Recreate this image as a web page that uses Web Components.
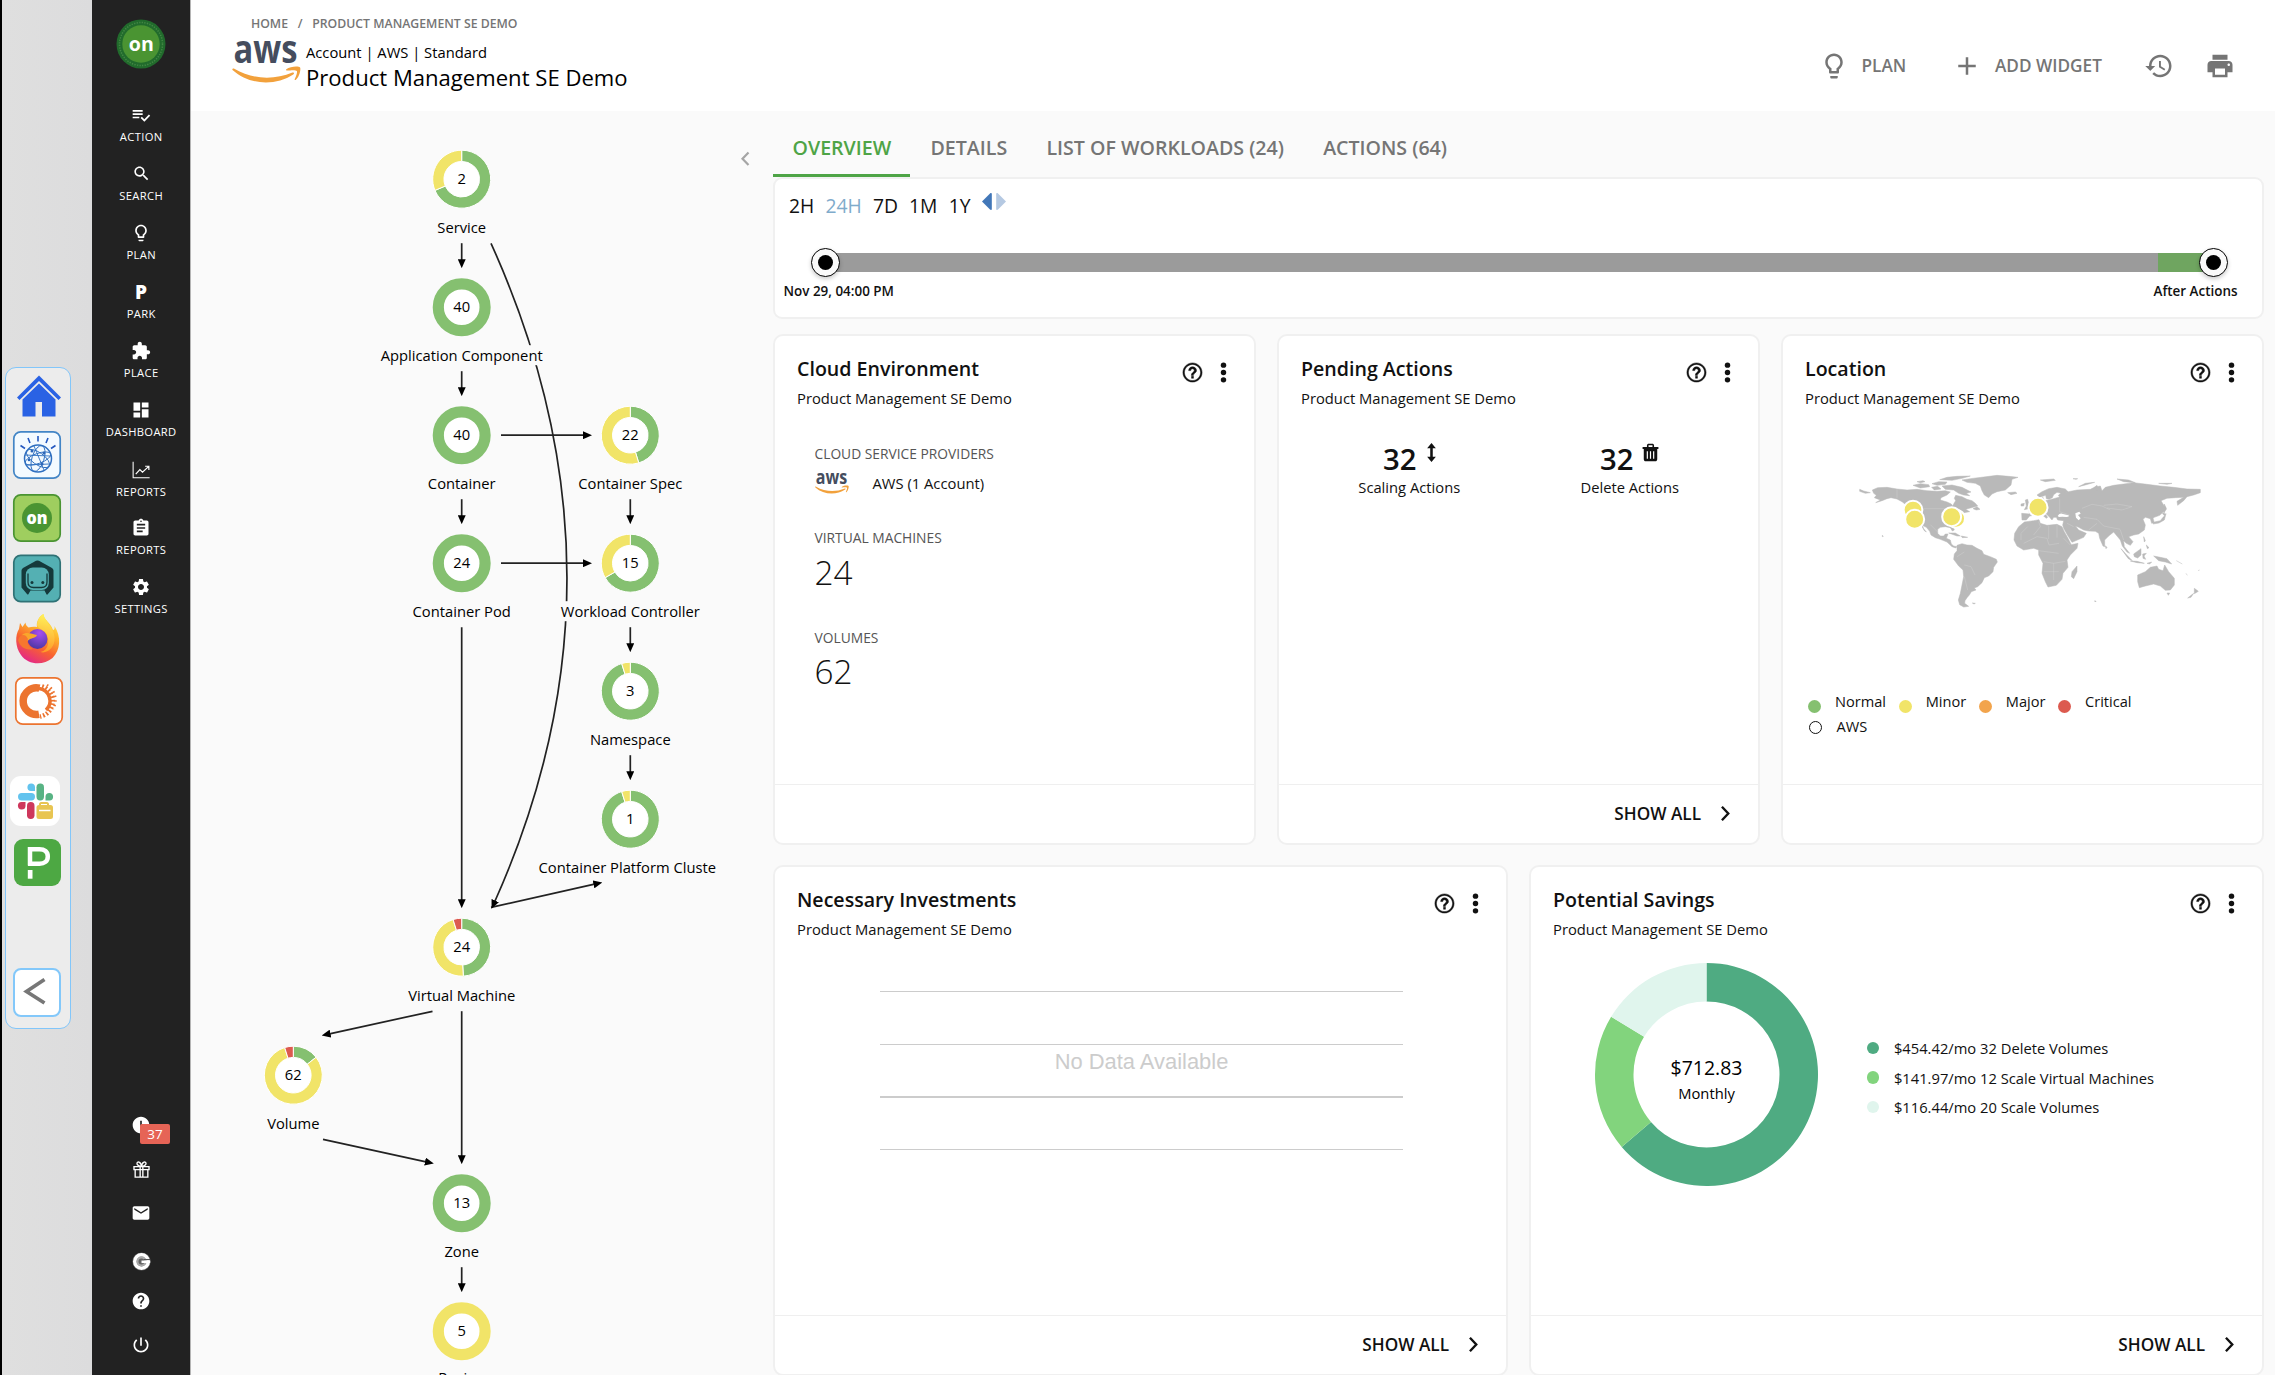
<!DOCTYPE html>
<html lang="en">
<head>
<meta charset="utf-8">
<title>Product Management SE Demo</title>
<style>
  html, body { margin: 0; height: 100%; overflow: hidden; }
  body { font-family: "Open Sans", "Liberation Sans", sans-serif; color: #111; background: #fafafa; }
</style>
</head>
<body>
<ops-app></ops-app>

<script>
const ICONS = {
  action: '<path d="M14 10H2v2h12v-2zm0-4H2v2h12V6zM2 16h8v-2H2v2zm19.5-4.5L23 13l-6.99 7-4.51-4.5L13 14l3.01 3 5.49-5.5z"/>',
  search: '<path d="M15.5 14h-.79l-.28-.27C15.41 12.59 16 11.11 16 9.5 16 5.91 13.09 3 9.5 3S3 5.91 3 9.5 5.91 16 9.5 16c1.61 0 3.09-.59 4.23-1.57l.27.28v.79l5 4.99L20.49 19l-4.99-5zm-6 0C7.01 14 5 11.99 5 9.5S7.01 5 9.5 5 14 7.01 14 9.5 11.99 14 9.5 14z"/>',
  bulb: '<path d="M9 21c0 .55.45 1 1 1h4c.55 0 1-.45 1-1v-1H9v1zm3-19C8.14 2 5 5.14 5 9c0 2.38 1.19 4.47 3 5.74V17c0 .55.45 1 1 1h6c.55 0 1-.45 1-1v-2.26c1.81-1.27 3-3.36 3-5.74 0-3.86-3.14-7-7-7zm2.85 11.1l-.85.6V16h-4v-2.3l-.85-.6C7.8 12.16 7 10.63 7 9c0-2.76 2.24-5 5-5s5 2.24 5 5c0 1.63-.8 3.16-2.15 4.1z"/>',
  place: '<path d="M20.5 11H19V7c0-1.1-.9-2-2-2h-4V3.5C13 2.12 11.88 1 10.5 1S8 2.12 8 3.5V5H4c-1.1 0-1.99.9-1.99 2v3.8H3.5c1.49 0 2.7 1.21 2.7 2.7s-1.21 2.7-2.7 2.7H2V20c0 1.1.9 2 2 2h3.8v-1.5c0-1.49 1.21-2.7 2.7-2.7 1.49 0 2.7 1.21 2.7 2.7V22H17c1.1 0 2-.9 2-2v-4h1.5c1.38 0 2.5-1.12 2.5-2.5S21.88 11 20.5 11z"/>',
  dashboard: '<path d="M3 13h8V3H3v10zm0 8h8v-6H3v6zm10 0h8V11h-8v10zm0-18v6h8V3h-8z"/>',
  chart: '<g fill="none" stroke="currentColor" stroke-width="1.4"><path d="M1.5 1v21.3H23.5"/><path stroke-width="1.6" d="M5 17.5l5.5-6 3.5 3.5L22 7.5M17.5 7H22.5V12"/></g>',
  clipboard: '<path d="M19 3h-4.18C14.4 1.84 13.3 1 12 1c-1.3 0-2.4.84-2.82 2H5c-1.1 0-2 .9-2 2v14c0 1.1.9 2 2 2h14c1.1 0 2-.9 2-2V5c0-1.1-.9-2-2-2zm-7 0c.55 0 1 .45 1 1s-.45 1-1 1-1-.45-1-1 .45-1 1-1zm2 14H7v-2h7v2zm3-4H7v-2h10v2zm0-4H7V7h10v2z"/>',
  gear: '<path d="M19.14,12.94c0.04-0.3,0.06-0.61,0.06-0.94c0-0.32-0.02-0.64-0.07-0.94l2.03-1.58c0.18-0.14,0.23-0.41,0.12-0.61l-1.92-3.32c-0.12-0.22-0.37-0.29-0.59-0.22l-2.39,0.96c-0.5-0.38-1.03-0.7-1.62-0.94L14.4,2.81c-0.04-0.24-0.24-0.41-0.48-0.41h-3.84c-0.24,0-0.43,0.17-0.47,0.41L9.25,5.35C8.66,5.59,8.12,5.92,7.63,6.29L5.24,5.33c-0.22-0.08-0.47,0-0.59,0.22L2.74,8.87C2.62,9.08,2.66,9.34,2.86,9.48l2.03,1.58C4.84,11.36,4.8,11.69,4.8,12s0.02,0.64,0.07,0.94l-2.03,1.58c-0.18,0.14-0.23,0.41-0.12,0.61l1.92,3.32c0.12,0.22,0.37,0.29,0.59,0.22l2.39-0.96c0.5,0.38,1.03,0.7,1.62,0.94l0.36,2.54c0.05,0.24,0.24,0.41,0.48,0.41h3.84c0.24,0,0.44-0.17,0.47-0.41l0.36-2.54c0.59-0.24,1.13-0.56,1.62-0.94l2.39,0.96c0.22,0.08,0.47,0,0.59-0.22l1.92-3.32c0.12-0.22,0.07-0.47-0.12-0.61L19.14,12.94z M12,15.6c-1.98,0-3.6-1.62-3.6-3.6s1.62-3.6,3.6-3.6s3.6,1.62,3.6,3.6S13.98,15.6,12,15.6z"/>',
  alert: '<path d="M12 2C6.48 2 2 6.48 2 12s4.48 10 10 10 10-4.48 10-10S17.52 2 12 2zm1 15h-2v-2h2v2zm0-4h-2V7h2v6z"/>',
  gift: '<g fill="none" stroke="currentColor" stroke-width="1.7"><path d="M2.5 8.3h19v3.9h-19zM4 12.2h16v9.4H4zM10.3 8.3v13.3M13.7 8.3v13.3M12 8C9 7.500 6.300 6.500 6.300 4.300 6.300 1.500 11 1.500 12 8c1-6.500 5.700-6.500 5.700-3.700C17.700 6.500 15 7.500 12 8z"/></g>',
  mail: '<path d="M20 4H4c-1.1 0-1.99.9-1.99 2L2 18c0 1.100.9 2 2 2h16c1.100 0 2-.9 2-2V6c0-1.100-.9-2-2-2zm0 4l-8 5-8-5V6l8 5 8-5v2z"/>',
  google: '<circle cx="12" cy="12" r="11.500" fill="#999" opacity=".55"/><circle cx="12" cy="12" r="8.500" fill="none" stroke="#fff" stroke-width="4.500"/><circle cx="12" cy="12" r="5" fill="none" stroke="#aaa" stroke-width="2.500"/><path fill="#555" d="M15 8.800h8v1.500h-8z"/><path fill="#fff" d="M12 10.800h11v3.200H12z"/>',
  help: '<path d="M12 2C6.480 2 2 6.480 2 12s4.480 10 10 10 10-4.480 10-10S17.520 2 12 2zm1 17h-2v-2h2v2zm2.070-7.750l-.9.920C13.450 12.900 13 13.500 13 15h-2v-.5c0-1.100.450-2.100 1.170-2.830l1.240-1.260c.370-.360.590-.860.590-1.410 0-1.100-.9-2-2-2s-2 .9-2 2H8c0-2.210 1.790-4 4-4s4 1.790 4 4c0 .880-.360 1.680-.930 2.250z"/>',
  power: '<path d="M13 3h-2v10h2V3zm4.830 2.170l-1.420 1.420C17.990 7.860 19 9.810 19 12c0 3.870-3.130 7-7 7s-7-3.130-7-7c0-2.190 1.010-4.140 2.580-5.420L6.170 5.170C4.230 6.820 3 9.260 3 12c0 4.970 4.030 9 9 9s9-4.030 9-9c0-2.740-1.230-5.180-3.170-6.830z"/>',
  plus: '<path d="M19 13h-6v6h-2v-6H5v-2h6V5h2v6h6v2z"/>',
  history: '<path d="M13 3c-4.970 0-9 4.030-9 9H1l3.890 3.890.070.140L9 12H6c0-3.870 3.130-7 7-7s7 3.130 7 7-3.130 7-7 7c-1.930 0-3.680-.790-4.940-2.060l-1.420 1.420C8.270 19.990 10.510 21 13 21c4.970 0 9-4.030 9-9s-4.030-9-9-9zm-1 5v5l4.280 2.540.720-1.210-3.500-2.080V8H12z"/>',
  print: '<path d="M19 8H5c-1.660 0-3 1.340-3 3v6h4v4h12v-4h4v-6c0-1.660-1.340-3-3-3zm-3 11H8v-5h8v5zm3-7c-.550 0-1-.450-1-1s.450-1 1-1 1 .450 1 1-.450 1-1 1zm-1-9H6v4h12V3z"/>',
  question: '<path stroke="currentColor" stroke-width=".5" d="M11 18h2v-2h-2v2zm1-16C6.480 2 2 6.480 2 12s4.480 10 10 10 10-4.480 10-10S17.520 2 12 2zm0 18.400c-4.600 0-8.400-3.800-8.400-8.400S7.400 3.600 12 3.600s8.400 3.800 8.400 8.400-3.800 8.400-8.400 8.400zM12 6c-2.210 0-4 1.790-4 4h2.200c0-1.100.8-1.900 1.800-1.900s1.800.8 1.800 1.900c0 2-3 1.750-3 5h2.200c0-2.250 3.200-2.500 3.200-5 0-2.210-1.990-4-4.200-4z"/>',
  dots: '<circle cx="12" cy="3.600" r="3.100"/><circle cx="12" cy="12" r="3.100"/><circle cx="12" cy="20.400" r="3.100"/>',
  next: '<path fill="none" stroke="currentColor" stroke-width="3" d="M7.500 3.500l8 8.500-8 8.500"/>',
  resize: '<path d="M12 0l5.500 6.600h-3.900v10.800h3.900L12 24l-5.500-6.600h3.900V6.600H6.500z"/>',
  trash: '<path d="M2 5h20v2.500H2zM7.500 5V3.200C7.500 1.500 8.500.8 10 .8h4c1.500 0 2.500.7 2.500 2.400V5h-2V2.800h-5V5zM3.500 7.500h17v13c0 1.500-1 2.700-2.500 2.700H6c-1.500 0-2.500-1.200-2.500-2.700z"/><path stroke="#fff" stroke-width="1.500" d="M8 10.500v9.500M12 10.500v9.500M16 10.500v9.500"/>'
};

/* Base class: clones its template into an open shadow root. */
class OpsElement extends HTMLElement {
  connectedCallback() {
    if (this.shadowRoot) return;
    const t = document.createElement('template');
    t.innerHTML = '<style>*{box-sizing:border-box}' + this.constructor.css + '</style>' + this.render();
    this.attachShadow({ mode: 'open' }).append(t.content.cloneNode(true));
  }
  a(n, d = '') { return this.getAttribute(n) ?? d; }
}
const define = (name, css, render) => customElements.define(name, class extends OpsElement {
  static css = css;
  render() { return render(this); }
});

define('ops-icon', `:host{display:block;flex:none;line-height:0}svg{display:block;fill:currentColor}`,
  e => `<svg width="${e.a('size', 20)}" height="${e.a('size', 20)}" viewBox="0 0 24 24">${ICONS[e.a('name')] || ''}</svg>`);

define('aws-logo', `:host{display:block;flex:none}svg{display:block;overflow:visible}text{font:700 38px "Open Sans",sans-serif;fill:#454d5e}`,
  e => `<svg width="${e.a('width', 68)}" height="${+e.a('width', 68) * 44 / 68}" viewBox="0 0 68 44">
    <text x="1.500" y="24" textLength="63" lengthAdjust="spacingAndGlyphs">aws</text>
    <path fill="#f2a13c" d="M.5 29.500C1 28.800 1.600 29 2.300 29.400 20 40 42 40.500 59.500 33c1.600-.5 2.300 1 .9 2C43 46.500 17 45.500.8 30.800.3 30.300.2 29.900.5 29.500z"/>
    <path fill="#f2a13c" d="M53.500 29.800c4-3 12.500-3.200 13.600-1.700 1 1.500-.6 9.300-4.300 12.200-.7.5-1.300.1-1-.6 1-2.400 3-7 2.100-8.200-.9-1.200-6.200-.7-9.300-.4-1.100.1-1.700-.7-1.100-1.300z"/>
  </svg>`);

/* ---------- desktop dock ---------- */
define('dock-tile', `
  :host{display:block;flex:none;width:48px;height:48px}
  svg{display:block;width:100%;height:100%;overflow:visible}
  text{font:800 18px "Open Sans",sans-serif}`,
  e => {
    const box = (fill, stroke) => `<rect x=".8" y=".8" width="46.400" height="46.400" rx="7" fill="${fill}" stroke="${stroke}" stroke-width="1.700"/>`;
    const art = {
      home: `<svg viewBox="0 0 44 42" preserveAspectRatio="none"><path fill="#2a62e4" d="M22 .5L44 22.500 41.500 25 22 6 2.500 25 0 22.500z"/><path fill="#2a62e4" d="M22 8.500L38.500 24.500V41.500H25V27h-6.500v14.500H5.500V24.500z"/></svg>`,
      globe: `<svg viewBox="0 0 48 48">${box('#f3faff', '#4285c6')}<g fill="none" stroke="#2f6fc0" stroke-width=".9"><circle cx="25" cy="27.500" r="13.500" stroke-width="1.500"/><ellipse cx="25" cy="27.500" rx="6" ry="13.500" transform="rotate(18 25 27.500)"/><ellipse cx="25" cy="27.500" rx="13.500" ry="5" transform="rotate(-20 25 27.500)"/><ellipse cx="25" cy="27.500" rx="13.500" ry="6" transform="rotate(35 25 27.500)"/><path d="M12 24l25 1M14 34l22-1M21 15l10 24"/></g><g fill="#2c66b8"><circle cx="19" cy="20" r="1.500"/><circle cx="31" cy="22" r="1.500"/><circle cx="29" cy="33" r="1.500"/><circle cx="16" cy="29" r="1.300"/></g><path stroke="#2458c0" stroke-width="1.600" d="M25 10.500V5M17 12l-2-5M33 12l2-5M12 17.500l-4.500-3M38 17.500l4.500-3"/></svg>`,
      on: `<svg viewBox="0 0 48 48">${box('#9fce5f', '#4a9432')}<circle cx="24" cy="24" r="15" fill="#4a9432"/><text x="24" y="29.500" text-anchor="middle" fill="#fff" textLength="21" lengthAdjust="spacingAndGlyphs">on</text></svg>`,
      bot: `<svg viewBox="0 0 48 48">${box('#54b0b3', '#2f7276')}<path fill="#15393b" d="M24.500 6q1.500 0 2.800 1L39 13.500q1.500 1 1.500 2.500v17L34.500 40q-.8.500-1.200-.5L31.500 36h-14l-2 3.500q-.5 1-1.300.2L8.500 33V16q0-1.500 1.500-2.500L21.700 7q1.300-1 2.800-1z"/><rect x="12.800" y="13" width="23" height="22.500" rx="7" fill="#54b0b3"/><path fill="none" stroke="#15393b" stroke-width="1.300" d="M15 19v8.500c0 4.500 2 5.500 5.500 5.500h8c3.500 0 5.500-1 5.500-5.500V19"/><circle cx="19" cy="28" r="1.500" fill="#15393b"/><circle cx="29.800" cy="28" r="1.500" fill="#15393b"/><path fill="#54b0b3" d="M19 37h11v4H19z"/></svg>`,
      firefox: `<svg viewBox="0 0 43 50"><defs><linearGradient id="f" x1=".8" y1="0" x2=".3" y2="1"><stop offset="0" stop-color="#fff24e"/><stop offset=".35" stop-color="#ffb12c"/><stop offset=".65" stop-color="#f8632f"/><stop offset="1" stop-color="#e3258a"/></linearGradient><linearGradient id="y" x1=".6" y1="0" x2=".5" y2="1"><stop offset="0" stop-color="#fff45a"/><stop offset="1" stop-color="#ff9a28"/></linearGradient><radialGradient id="p" cx=".6" cy=".2" r=".9"><stop offset="0" stop-color="#a84df0"/><stop offset="1" stop-color="#44359c"/></radialGradient></defs><path fill="url(#f)" d="M27.500 0c0 6 7 8 9.500 16 1 0 2-1 1.500-4 7 11 6 24-2 32C27 52 12 51 5 41-1 33-1 21 3 15l1-6c1 1.500 2 3 2.500 4L9.500 8.500c0 2 1.500 4 3 5 3-1 6-1 8.500-.5-1-5 2-11 6.500-13z"/><path fill="url(#y)" d="M27.500 0c0 6 10 12 11 23s-8 17-14 15c9-2 9-12 6-18-2-4-10-6-9.500-9 .5-5 3-9.500 6.500-11z"/><circle cx="21.500" cy="25" r="10" fill="url(#p)"/><path fill="#f9a62c" d="M6 21c4-4 10-1 15 0-1 3-5 3-7 4-1.500 1-3 3-6 2z"/><path fill="#f6772f" d="M2 26c2-5 5-6 8-4l2 3c-2 3 1 8 5 10-7 2-13-2-15-9z"/></svg>`,
      ring: `<svg viewBox="0 0 48 48">${box('#fff', '#ec7430')}<path fill="none" stroke="#ec7430" stroke-width="7.500" d="M24.500 11.200A13.300 13.300 0 1 0 24 37.200"/><path fill="none" stroke="#ec7430" stroke-width="3.500" d="M24 11.500A12.500 12.500 0 0 1 31 33"/><path fill="none" stroke="#ec7430" stroke-width="4.500" stroke-dasharray="1.700 1.900" d="M27 9.500A15.500 15.500 0 0 1 25 39.500"/><path fill="none" stroke="#ec7430" stroke-width="2.500" stroke-dasharray="1.500 3" d="M32 8A17.500 17.500 0 0 1 38 32"/></svg>`,
      slack: `<svg viewBox="0 0 50 50"><rect width="50" height="50" rx="11" fill="#fff"/><g fill="#62c3ee"><rect x="8" y="17" width="17" height="7.500" rx="3.700"/><path d="M25 15h-4a3.800 3.800 0 1 1 4-4z"/></g><g fill="#58b384"><rect x="26.500" y="7.500" width="7.500" height="17" rx="3.700"/><path d="M35.500 24.500v-4a3.800 3.800 0 1 1 4 4z"/></g><g fill="#ce375c"><rect x="17" y="26" width="7.500" height="17" rx="3.700"/><path d="M15.500 26v4a3.800 3.800 0 1 1-4-4z"/></g><g fill="#e8c552"><path d="M29 29.500v-1.500c0-1 1-2 2-2h6c1 0 2 1 2 2v1.500h-2V28h-6v1.500z"/><rect x="26.500" y="29" width="16.500" height="14" rx="2.500"/></g><path stroke="#fff" stroke-width="1.500" d="M29 34.500h11.500"/></svg>`,
      pager: `<svg viewBox="0 0 47 47"><rect width="47" height="47" rx="9" fill="#4da843"/><path fill="none" stroke="#fff" stroke-width="4.500" d="M16 26.500V10.200h9.500c5 0 8.300 2.600 8.300 7.200s-3.300 7.300-8.300 7.300H14"/><path fill="#fff" d="M13.800 31h4.700v8.700h-4.700z"/></svg>`,
      back: `<svg viewBox="0 0 48 49"><rect x="1" y="1" width="46" height="47" rx="7" fill="#fff" stroke="#83c8fa" stroke-width="2"/><path fill="none" stroke="#777" stroke-width="3.700" d="M31.500 11.500L13.500 23.500l18 11.500"/></svg>`
    };
    return art[e.a('kind')];
  });

define('desktop-dock', `
  :host{display:flex;flex-direction:column;flex:none;width:92px;height:1375px;border-left:2px solid #000;background:linear-gradient(90deg,#dfdfdf,#dcdcdd);padding-top:367px}
  .panel{display:flex;flex-direction:column;align-items:flex-start;width:66px;height:662px;margin-left:3px;padding:7px 0 0 7px;border:1px solid #82c6fa;border-radius:11px;background:#ececec}`,
  () => {
    const tiles = [['home', 3.5, 0, 44, 42], ['globe', 0, 14, 48, 48], ['on', 0, 15, 48, 48], ['bot', 0, 12, 48, 49],
      ['firefox', 3, 11, 43, 50], ['ring', 2, 13, 48, 48], ['slack', -3, 51, 50, 50], ['pager', 1, 13, 47, 47], ['back', 0, 82, 48, 49]];
    return `<div class="panel">${tiles.map(([k, l, t, w, h]) => `<dock-tile kind="${k}" style="margin:${t}px 0 0 ${l}px;width:${w}px;height:${h}px"></dock-tile>`).join('')}</div>`;
  });

/* ---------- navigation rail ---------- */
define('nav-item', `
  :host{display:flex;flex-direction:column;align-items:center;gap:4px;height:59px;color:#fff}
  .i{display:flex;align-items:center;justify-content:center;height:20px;font:800 19px/20px "Open Sans",sans-serif}
  span{font-size:11.200px;line-height:16px;letter-spacing:.35px;margin-right:-.35px}`,
  e => `<div class="i">${e.a('icon') ? `<ops-icon name="${e.a('icon')}" size="${e.a('size', 20)}"></ops-icon>` : e.a('glyph')}</div><span><slot></slot></span>`);

define('nav-rail', `
  :host{display:flex;flex-direction:column;align-items:stretch;flex:none;width:99px;height:1375px;background:#222;border-right:1px solid #b5b5b5;padding-top:19px}
  .logo{display:block;flex:none;margin:0 auto 35.500px}
  .low{padding-top:1.500px;height:59px}
  .foot{display:flex;flex-direction:column;align-items:center;margin-top:auto;color:#fff;height:260px}
  .foot>*{flex:none}
  .alert{position:relative;margin-bottom:25px}
  .badge{position:absolute;left:9px;top:8.500px;width:30px;height:20px;border-radius:2px;background:#e66456;color:#fff;font-size:13.500px;line-height:20px;text-align:center}
  text{font:700 20px "Open Sans",sans-serif}`,
  () => `<svg class="logo" width="50" height="50" viewBox="0 0 50 50"><circle cx="25" cy="25" r="24.500" fill="#216b2c"/><circle cx="25" cy="25" r="21.500" fill="none" stroke="#5a9a55" stroke-width="1.500" stroke-dasharray="1.300 1.300" opacity=".6"/><circle cx="25" cy="25" r="18.700" fill="#4a9432"/><text x="25.300" y="31.500" text-anchor="middle" fill="#fff" textLength="25" lengthAdjust="spacingAndGlyphs">on</text></svg>
  <nav-item icon="action">ACTION</nav-item><nav-item icon="search" size="19">SEARCH</nav-item><nav-item icon="bulb">PLAN</nav-item>
  <nav-item glyph="P">PARK</nav-item><nav-item icon="place">PLACE</nav-item><nav-item icon="dashboard">DASHBOARD</nav-item>
  <nav-item class="low" icon="chart" size="18">REPORTS</nav-item><nav-item icon="clipboard">REPORTS</nav-item><nav-item icon="gear">SETTINGS</nav-item>
  <div class="foot">
    <div class="alert"><ops-icon name="alert" size="20"></ops-icon><div class="badge">37</div></div>
    <ops-icon name="gift" size="19" style="margin-bottom:24px"></ops-icon>
    <ops-icon name="mail" size="20" style="margin-bottom:29px"></ops-icon>
    <ops-icon name="google" size="19" style="margin-bottom:20px"></ops-icon>
    <ops-icon name="help" size="20" style="margin-bottom:24px"></ops-icon>
    <ops-icon name="power" size="20"></ops-icon>
  </div>`);

/* ---------- header ---------- */
define('page-header', `
  :host{display:flex;justify-content:space-between;flex:none;height:111px;background:#fff;color:#000}
  .crumb{display:flex;gap:9.700px;margin:13.500px 0 0 60px;font-size:12.280px;line-height:20px;font-weight:600;color:#757575}
  .row{display:flex;margin:6.500px 0 0 41px;gap:5px}
  aws-logo{margin-top:-1px}
  .kind{font-size:14.740px;line-height:23px;padding-top:1px}
  .title{font-size:22.100px;line-height:31px;margin-top:-2px}
  .actions{display:flex;align-items:center;padding:20px 40px 0 0;color:#757575;font-size:17.200px;font-weight:600;line-height:24px}
  .btn{display:flex;align-items:center;gap:13px}
  .btn span{white-space:nowrap}`,
  () => `<div><div class="crumb"><span>HOME</span><span>/</span><span>PRODUCT MANAGEMENT SE DEMO</span></div>
    <div class="row"><aws-logo width="69"></aws-logo><div><div class="kind">Account | AWS | Standard</div><div class="title">Product Management SE Demo</div></div></div></div>
  <div class="actions">
    <div class="btn" style="width:133.500px"><ops-icon name="bulb" size="30"></ops-icon><span>PLAN</span></div>
    <div class="btn" style="width:192px"><ops-icon name="plus" size="30"></ops-icon><span>ADD WIDGET</span></div>
    <ops-icon name="history" size="30"></ops-icon>
    <ops-icon name="print" size="30" style="margin-left:31px"></ops-icon>
  </div>`);

/* ---------- supply chain graph ---------- */
const GREEN = '#85c070', YELLOW = '#f1e468', RED = '#dc5a4f';
function arc(cx, cy, R, r, a, b, fill, extra = '') {
  const p = (rad, t) => `${(cx + rad * Math.sin(t * 2 * Math.PI)).toFixed(2)} ${(cy - rad * Math.cos(t * 2 * Math.PI)).toFixed(2)}`;
  if (b - a >= 1) return `<circle cx="${cx}" cy="${cy}" r="${(R + r) / 2}" fill="none" stroke="${fill}" stroke-width="${R - r}"/>`;
  const big = b - a > .5 ? 1 : 0;
  return `<path fill="${fill}" ${extra} d="M${p(R, a)}A${R} ${R} 0 ${big} 1 ${p(R, b)}L${p(r, b)}A${r} ${r} 0 ${big} 0 ${p(r, a)}Z"/>`;
}
define('supply-chain', `
  :host{display:block;flex:none;width:582px;height:1264px}
  svg{display:block}
  text{font-size:14.740px;text-anchor:middle;fill:#000}`,
  () => {
    const A = 461.700, B = 630.300, V = 293.300, y = i => 179.200 + 128 * i;
    const nodes = [
      [A, y(0), 2, 'Service', [[.687, GREEN], [1, YELLOW]]],
      [A, y(1), 40, 'Application Component', [[1, GREEN]]],
      [A, y(2), 40, 'Container', [[1, GREEN]]],
      [B, y(2), 22, 'Container Spec', [[.453, GREEN], [1, YELLOW]]],
      [A, y(3), 24, 'Container Pod', [[1, GREEN]]],
      [B, y(3), 15, 'Workload Controller', [[.667, GREEN], [1, YELLOW]]],
      [B, y(4), 3, 'Namespace', [[.952, GREEN], [1, YELLOW]]],
      [B, y(5), 1, 'Container Platform Cluste', [[.952, GREEN], [1, YELLOW]]],
      [A, y(6), 24, 'Virtual Machine', [[.491, GREEN], [.952, YELLOW], [1, RED]]],
      [V, y(7), 62, 'Volume', [[.144, GREEN], [.952, YELLOW], [1, RED]]],
      [A, y(8), 13, 'Zone', [[1, GREEN]]],
      [A, y(9), 5, 'Region', [[1, YELLOW]]]
    ];
    const L = (x1, y1, x2, y2) => `M${x1} ${y1}L${x2} ${y2}`;
    const v = (x, i, j) => L(x, y(i) + 64, x, y(j) - 47);
    const edges = [v(A, 0, 1), v(A, 1, 2), v(A, 2, 3), v(A, 3, 6), v(A, 6, 8), v(A, 8, 9), v(B, 2, 3), v(B, 3, 4), v(B, 4, 5),
      L(501, y(2), 584, y(2)), L(501, y(3), 584, y(3)), L(491, 907.300, 594.500, 884.200), L(432.500, 1011.300, 329.500, 1033.800), L(323, 1139.300, 426, 1161.800),
      'M491 243.300Q641 575 494.800 901.500'];
    let out = edges.map(d => `<path d="${d}" fill="none" stroke="#222" stroke-width="1.700" marker-end="url(#tip)"/>`).join('');
    for (const [x, cy, n, label, segs] of nodes) {
      const lx = label.startsWith('Container Platform') ? x - 3 : x;
      const w = label.length * 7.300;
      const ly = cy + (label === 'Region' ? 52.200 : 53.700);
      out += `<rect x="${lx - w / 2}" y="${cy + 38}" width="${w}" height="20" fill="#fafafa"/>`;
      let a = 0;
      out += `<circle cx="${x}" cy="${cy}" r="29" fill="#fff"/>`;
      for (const [b, f] of segs) { out += arc(x, cy, 29, 17.800, a, b, f, 'stroke="#fff" stroke-width="1"'); a = b; }
      out += `<text x="${x}" y="${cy + 4.800}">${n}</text><text x="${lx}" y="${ly}">${label}</text>`;
    }
    return `<svg width="582" height="1264" viewBox="191 111 582 1264"><defs><marker id="tip" viewBox="0 0 9 8" refX="1" refY="4" markerWidth="9" markerHeight="8" markerUnits="userSpaceOnUse" orient="auto"><path d="M0 0L9 4 0 8z"/></marker></defs>${out}
      <path d="M748.500 152.500L742.500 158.800l6 6.200" fill="none" stroke="#a5a5a5" stroke-width="2.200"/></svg>`;
  });

/* ---------- tabs and time range ---------- */
define('tab-bar', `
  :host{display:flex;height:66px;align-items:flex-end;color:#757575;font-size:19.600px;font-weight:600;line-height:24px}
  div{padding:0 19.500px 14px;border-bottom:3px solid transparent;white-space:nowrap;margin-right:.2px}
  .on{color:#4ea446;border-color:#4ea446;width:137px;margin-right:1px}`,
  () => `<div class="on">OVERVIEW</div><div>DETAILS</div><div>LIST OF WORKLOADS (24)</div><div>ACTIONS (64)</div>`);

define('time-range', `
  :host{display:block;height:142px;background:#fff;border:2px solid #f0f0f0;border-radius:9px}
  .r{display:flex;align-items:center;padding:12.600px 0 0 14px;font-size:19.300px;line-height:28px;color:#111}
  .r span{margin-right:11.200px}.r .sel{color:#7fabcb}
  .arrows{margin-top:-8px}
  .s{display:flex;align-items:center;height:29px;margin:28.400px 34px 0 36px}
  .bar{flex:1;height:19px;margin:0 -14px;background:#9b9b9b}
  .done{flex:none;width:55px;height:19px;margin:0 -14px 0 14px;background:#6fa560}
  .k{position:relative;flex:none;width:29px;height:29px;border-radius:50%;border:1.500px solid #000;background:#fafafa;display:flex;align-items:center;justify-content:center;box-shadow:0 2px 4px #0003}
  .k::after{content:"";width:15px;height:15px;border-radius:50%;background:#000}
  .l{display:flex;justify-content:space-between;padding:4px 24.500px 0 8.500px;font-size:13.450px;line-height:20px;font-weight:600}`,
  () => `<div class="r"><span>2H</span><span class="sel">24H</span><span>7D</span><span>1M</span><span>1Y</span>
    <svg class="arrows" width="25" height="17" viewBox="0 0 25 17"><path fill="#4277b8" d="M0 8.500L8 .5c1-.8 1.800-.4 1.800.8v14.400c0 1.200-.8 1.600-1.800.8z"/><path fill="#b5c9e2" d="M24 8.500l-8-8c-1-.8-1.800-.4-1.800.8v14.400c0 1.200.8 1.600 1.800.8z"/></svg></div>
  <div class="s"><div class="k"></div><div class="bar"></div><div class="done"></div><div class="k"></div></div>
  <div class="l"><span>Nov 29, 04:00 PM</span><span>After Actions</span></div>`);

/* ---------- widget card ---------- */
define('widget-card', `
  :host{display:flex;flex-direction:column;height:511px;background:#fff;border:2px solid #f0f0f0;border-radius:10px;color:#111}
  header{display:flex;justify-content:space-between;padding:18.500px 28px 0 22px}
  h2{margin:0;font-size:19.600px;line-height:28px;font-weight:600}
  p{margin:4.600px 0 0;font-size:14.770px;line-height:22px}
  .t{display:flex;align-items:center;gap:17px;height:36px}
  main{flex:1;min-height:0}
  footer{display:flex;align-items:center;justify-content:flex-end;gap:15px;height:59px;flex:none;border-top:1.500px solid #efefef;padding:0 23px 1px 0;font-size:17.200px;font-weight:600}`,
  e => `<header><div><h2>${e.a('heading')}</h2><p>Product Management SE Demo</p></div>
    <div class="t"><ops-icon name="question" size="23"></ops-icon><ops-icon name="dots" size="21" style="margin:0 -8px 0 -8px"></ops-icon></div></header>
  <main><slot></slot></main>
  <footer>${e.hasAttribute('more') ? 'SHOW ALL<ops-icon name="next" size="19"></ops-icon>' : ''}</footer>`);

define('cloud-summary', `
  :host{display:block;padding:34.500px 0 0 39.500px}
  .c{font-size:13.800px;line-height:20px;color:#555}
  .row{display:flex;align-items:center;gap:24px;height:26px;margin:6.500px 0 32px;font-size:14.770px}
  .n{font-size:33.300px;line-height:44px;font-weight:300;margin:1.500px 0 34px}`,
  () => `<div class="c">CLOUD SERVICE PROVIDERS</div><div class="row"><aws-logo width="34"></aws-logo><span>AWS (1 Account)</span></div>
  <div class="c">VIRTUAL MACHINES</div><div class="n">24</div><div class="c">VOLUMES</div><div class="n">62</div>`);

define('pending-count', `
  :host{flex:1;display:flex;flex-direction:column;align-items:center;font-size:14.740px;line-height:20px}
  .n{display:flex;gap:7px;font-size:29.300px;line-height:40px;font-weight:600;margin-bottom:-1.500px}
  ops-icon{margin-top:4px}
  .resize{margin-left:-2px;margin-right:-5px}`,
  e => `<div class="n">${e.a('count')}<ops-icon class="${e.a('icon')}" name="${e.a('icon')}" size="19"></ops-icon></div><slot></slot>`);
define('pending-actions', `:host{display:flex;padding:29.800px 18px 0 20px}`,
  () => `<pending-count count="32" icon="resize">Scaling Actions</pending-count><pending-count count="32" icon="trash">Delete Actions</pending-count>`);

define('world-map', `
  :host{display:block;padding:64.500px 0 0 74px}
  svg{display:block}
  .lg{display:flex;gap:12.600px;margin:83px 0 0 -49px;font-size:14.600px;line-height:24px}
  .lg div{display:flex;align-items:center;gap:14px}
  i{width:13px;height:13px;border-radius:50%;margin-top:11px}`,
  () => `<svg width="345" height="132" viewBox="260 132 1035 396" overflow="visible">
  <g fill="#b9b9b9" stroke="#b9b9b9" stroke-width="1.500" stroke-linejoin="round">
  <path d="M306 180L322 173 350 172 380 177 410 180 440 178 470 182 500 184 525 182 540 186 530 195 512 203 510 210 530 216 543 222 547 228 552 218 556 212 552 205 556 196 575 200 590 208 605 212 615 220 622 228 600 234 586 238 598 245 580 248 575 256 560 266 552 278 548 290 552 300 546 303 540 293 525 290 510 292 502 298 502 310 510 318 520 318 525 312 533 312 528 325 540 330 543 342 550 348 560 350 556 354 545 350 530 336 510 328 495 323 482 315 478 304 468 292 456 286 460 296 468 306 462 302 452 284 430 284 418 268 408 250 404 235 408 225 395 215 380 207 362 203 350 206 335 212 316 218 330 210 312 203 318 196 310 190Z"/>
  <path d="M560 346L575 341 590 345 605 346 620 355 635 362 640 373 660 380 678 388 681 396 670 412 668 425 655 438 642 443 635 458 622 470 612 474 617 480 603 485 597 495 590 503 584 512 583 520 595 529 580 531 568 524 564 510 570 490 575 465 580 440 578 420 565 408 550 388 552 372 560 362Z"/>
  <path d="M575 150L600 146 640 141 680 136 715 139 743 142 725 148 722 165 705 180 680 185 665 192 655 203 642 195 635 182 630 168 615 160 590 157Z"/>
  <path d="M508 149L530 142 560 139 600 138 575 145 545 151ZM428 166L450 161 475 164 478 170 450 174ZM440 155l18-3 6 3-14 3zM485 161L505 155 530 156 525 163 500 166ZM484 172l18-3 10 8-20 3zM515 168L545 165 575 172 602 186 588 190 598 197 580 195 565 190 550 180 525 178ZM608 236L620 230 629 238 618 240ZM535 309L555 309 570 318 560 318ZM573 318L592 322 576 323ZM712 188L735 186 740 190 722 194ZM810 150L850 147 855 151 825 155ZM268 178L280 183 300 188 285 190 268 184Z"/>
  <path d="M765 210L772 208 776 225 780 235 762 239 768 228ZM752 222L762 220 760 228 752 228Z"/>
  <path d="M754 250L778 252 775 240 790 232 800 222 815 216 812 206 818 202 822 212 835 210 850 206 868 201 864 196 872 190 860 187 850 194 846 203 836 208 828 206 826 196 808 202 800 195 815 185 835 176 860 172 885 177 893 185 880 188 905 183 920 180 960 178 972 172 990 168 995 182 1005 172 1030 166 1060 162 1090 158 1130 163 1170 168 1210 172 1250 177 1290 178 1290 188 1270 195 1250 200 1240 212 1222 226 1220 214 1240 202 1215 203 1190 205 1172 212 1178 222 1188 238 1168 256 1152 262 1148 265 1152 278 1144 280 1140 266 1125 262 1118 268 1125 285 1122 300 1105 312 1090 315 1075 320 1088 335 1080 346 1068 340 1060 332 1062 350 1078 370 1070 366 1056 348 1050 330 1040 318 1030 306 1015 318 1003 330 1003 350 998 348 988 325 985 310 975 304 955 303 940 300 925 292 915 288 925 300 948 310 940 322 905 337 893 318 880 295 877 285 880 272 862 270 858 262 850 262 845 270 838 262 828 252 822 248 832 262 828 265 815 254 805 252 790 256 778 258 768 270 755 270Z"/>
  <path d="M925 170L945 160 973 157 948 164ZM972 172l8-6 4 14-8 2zM1040 147L1075 150 1095 158 1060 155ZM1165 160L1205 160 1190 163ZM908 146h14l-5 2zM1182 222L1188 235 1180 252ZM1186 255L1182 270 1166 279 1148 282 1152 276 1170 272 1178 262ZM1176 250l12 2-6 5z"/>
  <path d="M762 276L790 272 806 269 810 280 830 286 860 283 875 290 882 305 893 325 903 344 923 340 920 355 900 375 890 390 893 412 878 430 875 448 858 466 833 471 825 455 815 430 818 400 805 375 805 360 790 355 760 360 740 348 731 330 733 310 745 290Z"/>
  <path d="M905 425L920 408 920 425 910 446 903 440ZM1005 347l5 5-3 4zM1052 356L1070 376 1086 392 1074 386ZM1080 393L1100 394 1122 400 1100 398ZM1090 372L1112 356 1112 375 1102 384 1092 380ZM1117 372L1128 370 1121 378 1126 388 1118 385ZM1120 320l5 12-3 4zM1128 345l8 8-5 3zM1150 378L1170 382 1190 386 1204 402 1185 396 1165 392ZM1102 435L1125 425 1140 412 1160 408 1165 418 1178 422 1183 405 1195 425 1212 445 1212 465 1200 480 1185 481 1170 468 1150 462 1125 468 1107 473 1102 455ZM1190 489h8l-4 7zM1272 475L1284 484 1272 491ZM1270 490L1262 502 1252 504ZM606 519l9 1-4 2zM336 316l3 3-3 1zM972 513h5v2zM1130 400l14-4-6 6zM1247 430l4 6M1283 422l5-2M1218 392l18 10M1095 290l3-4"/>
  </g>
  <g fill="#fff"><path d="M862 258q6-10 16-6l16 4q6 4-6 5-14-2-22 0z"/><path d="M915 250l12-5 4 6-8 4 8 10-6 6-8-8z"/></g>
  <g fill="none" stroke="#dcdcdc" stroke-width=".9"><path d="M380 177v28M410 236h120M480 284l24 24M560 380l22-14M582 405l20 5 12 25M582 440l10 40M772 290l-20 20v20M805 275l5 15-20 25M835 287v40M860 285v38M760 340l40-20 30 5 6 20 30-5M805 362l60 8M820 395l30 5 35-6M820 425h45M850 400v50M880 325l20 20M868 205v40l30 10M935 235l30-12 30 5 25 12M1000 226l40-4 45 8-30 10-45-6M940 262l40 6 20 20 50 10M955 300l25-20M890 280l20 10M1050 300l10 30"/></g>
  <g fill="#f1e468" stroke="#fff" stroke-width="6"><circle cx="428" cy="240" r="28"/><circle cx="433" cy="268" r="28.500"/><circle cx="557" cy="266" r="27"/><circle cx="544" cy="260" r="28.500"/><circle cx="803" cy="232" r="28.500"/></g></svg>
  <div class="lg"><div><i style="background:#85c070"></i>Normal</div><div><i style="background:#f1e468"></i>Minor</div><div><i style="background:#f2a44c"></i>Major</div><div><i style="background:#dc5a4f"></i>Critical</div></div>
  <div class="lg" style="margin-top:1px"><div style="gap:14.500px"><i style="border:1.300px solid #111;margin-left:1px;margin-top:3px"></i>AWS</div></div>`);

define('empty-chart', `
  :host{display:grid;width:523px;height:159px;margin:51px auto 0;position:relative;left:1px}
  .lines,.msg{grid-area:1/1}
  .lines{display:flex;flex-direction:column;justify-content:space-between}
  i{height:1.400px;background:#ccc}
  .msg{align-self:center;justify-self:center;margin-top:-17px;font:21.900px/26px "Liberation Sans",sans-serif;color:#ccc}`,
  () => `<div class="lines"><i></i><i></i><i></i><i></i></div><div class="msg">No Data Available</div>`);

define('savings-chart', `
  :host{display:flex;align-items:center;padding:21.500px 0 0 63px}
  .d text{font-size:19.500px;text-anchor:middle;fill:#000}.d .m{font-size:14.740px}
  .k{display:flex;flex-direction:column;gap:5.500px;margin:0 0 -7px 47.800px;font-size:14.740px;line-height:24px}
  .k div{display:flex;align-items:center;gap:14.500px}
  i{width:12.600px;height:12.600px;border-radius:50%}`,
  () => `<svg class="d" width="225" height="225" viewBox="-112.500 -112.500 225 225">${arc(0, 0, 111.500, 73, 0, .6375, '#4fab82')}${arc(0, 0, 111.500, 73, .6375, .8367, '#82d47d')}${arc(0, 0, 111.500, 73, .8367, 1, '#e0f5ed')}
    <text y="0">$712.83</text><text class="m" y="24.800">Monthly</text></svg>
  <div class="k"><div><i style="background:#4fab82"></i>$454.42/mo 32 Delete Volumes</div><div><i style="background:#82d47d"></i>$141.97/mo 12 Scale Virtual Machines</div><div><i style="background:#e0f5ed"></i>$116.44/mo 20 Scale Volumes</div></div>`);

define('ops-app', `
  :host{display:flex;width:2275px;height:1375px;overflow:hidden}
  .page{flex:1;display:flex;flex-direction:column;min-width:0;background:#fafafa}
  .body{display:flex;flex:1;min-height:0}
  .right{flex:1;padding-right:11px;min-width:0}
  .g{display:flex;gap:21px;margin-top:15px}
  .g+.g{margin-top:20px}
  widget-card{flex:1}`,
  () => `<desktop-dock></desktop-dock><nav-rail></nav-rail>
  <div class="page"><page-header></page-header><div class="body"><supply-chain></supply-chain>
    <div class="right"><tab-bar></tab-bar><time-range></time-range>
      <div class="g"><widget-card heading="Cloud Environment"><cloud-summary></cloud-summary></widget-card>
        <widget-card heading="Pending Actions" more><pending-actions></pending-actions></widget-card>
        <widget-card heading="Location"><world-map></world-map></widget-card></div>
      <div class="g"><widget-card heading="Necessary Investments" more><empty-chart></empty-chart></widget-card>
        <widget-card heading="Potential Savings" more><savings-chart></savings-chart></widget-card></div>
    </div></div></div>`);
</script>
</body>
</html>
